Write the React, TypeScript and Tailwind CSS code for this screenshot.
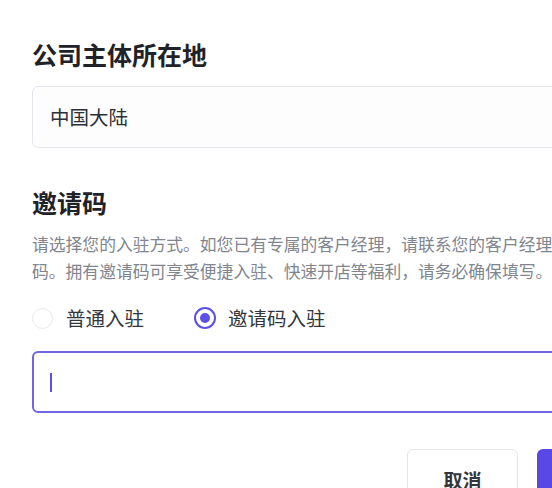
import { useState } from 'react';

export default function App() {
  const [mode, setMode] = useState<'normal' | 'invite'>('invite');

  return (
    <div
      className="w-[552px] h-[488px] overflow-hidden bg-white"
      style={{ fontFamily: '"Noto Sans CJK SC", "Noto Sans", sans-serif' }}
    >
      <div className="w-[616px] ml-[32px] pt-[38px] flex flex-col">
        {/* Company location */}
        <h2 className="text-[25px] leading-[32px] font-semibold text-[#1f2329]">
          公司主体所在地
        </h2>
        <div className="mt-[16px] h-[62px] border-[1.5px] border-[#e3e6eb] bg-[#fdfdfe] rounded-[6px] flex items-center px-[17px] text-[19.5px] text-[#2b2f36]">
          中国大陆
        </div>

        {/* Invite code */}
        <h2 className="mt-[38px] text-[25px] leading-[32px] font-semibold text-[#1f2329]">
          邀请码
        </h2>
        <p className="mt-[13px] w-[595px] text-[16.8px] leading-[27px] text-[#80858e]">
          请选择您的入驻方式。如您已有专属的客户经理，请联系您的客户经理获取邀请码。拥有邀请码可享受便捷入驻、快速开店等福利，请务必确保填写。
        </p>

        {/* Radios */}
        <div className="mt-[21px] h-[24px] flex items-center text-[19.5px] text-[#33373d]">
          <label
            className="flex items-center gap-[13px] cursor-pointer"
            onClick={() => setMode('normal')}
          >
            <span
              className={
                mode === 'normal'
                  ? 'w-[21px] h-[21px] rounded-full border-2 border-[#5b50e8] flex items-center justify-center'
                  : 'w-[21px] h-[21px] rounded-full border border-[#e6e8ec] flex items-center justify-center'
              }
            >
              {mode === 'normal' && <span className="w-[10px] h-[10px] rounded-full bg-[#5b50e8]" />}
            </span>
            普通入驻
          </label>
          <label
            className="ml-[50px] flex items-center gap-[12px] cursor-pointer"
            onClick={() => setMode('invite')}
          >
            <span
              className={
                mode === 'invite'
                  ? 'w-[22px] h-[22px] rounded-full border-2 border-[#5b50e8] flex items-center justify-center'
                  : 'w-[22px] h-[22px] rounded-full border border-[#e6e8ec] flex items-center justify-center'
              }
            >
              {mode === 'invite' && <span className="w-[10px] h-[10px] rounded-full bg-[#5b50e8]" />}
            </span>
            邀请码入驻
          </label>
        </div>

        {/* Invite code input */}
        <div className="mt-[21px] h-[62px] border-2 border-[#6e66e6] rounded-[6px] flex items-center px-[16px]">
          <span className="w-[2px] h-[19px] bg-[#5b50e8]" />
        </div>

        {/* Actions */}
        <div className="mt-[36px] flex justify-end gap-[19px]">
          <button className="w-[111px] h-[62px] border-[1.5px] border-[#e3e6eb] rounded-[6px] bg-white text-[19px] font-semibold text-[#33373d] flex items-center justify-center">
            取消
          </button>
          <button className="w-[111px] h-[62px] rounded-[6px] bg-[#5a48e6] text-[19px] font-semibold text-white flex items-center justify-center">
            确认
          </button>
        </div>
      </div>
    </div>
  );
}
